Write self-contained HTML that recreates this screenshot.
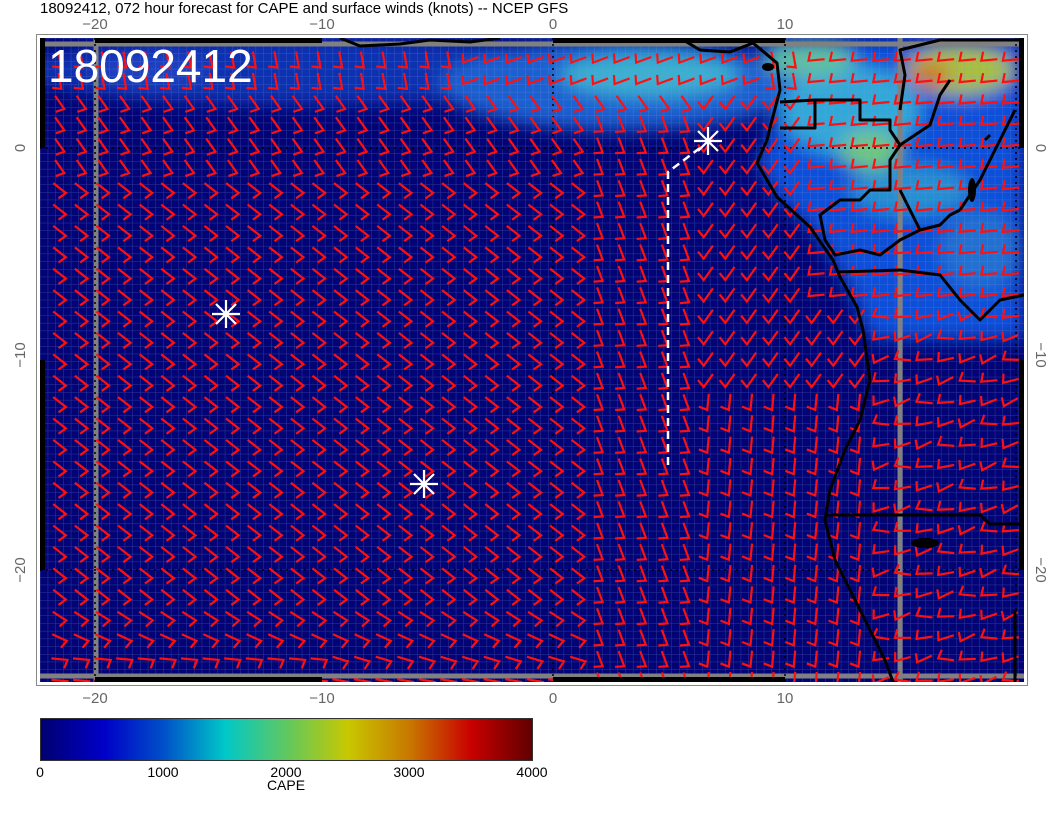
<!DOCTYPE html>
<html><head><meta charset="utf-8"><style>
html,body{margin:0;padding:0;background:#fff;width:1056px;height:816px;overflow:hidden}
svg{display:block}
text{font-family:"Liberation Sans",sans-serif}
</style></head><body>
<svg id="s" width="1056" height="816" viewBox="0 0 1056 816" xmlns="http://www.w3.org/2000/svg">
<defs>
<pattern id="g" width="7.7" height="7.7" patternUnits="userSpaceOnUse" x="40" y="38">
<path d="M0 0H7.7M0 0V7.7" stroke="rgba(130,150,230,0.35)" stroke-width="1" fill="none"/>
</pattern>
<filter id="b" x="-30%" y="-30%" width="160%" height="160%"><feGaussianBlur stdDeviation="9"/></filter>
<linearGradient id="cb" x1="0" x2="1">
<stop offset="0" stop-color="#000070"/><stop offset="0.13" stop-color="#0000c8"/>
<stop offset="0.25" stop-color="#0050c8"/><stop offset="0.375" stop-color="#00c8c8"/>
<stop offset="0.5" stop-color="#60c860"/><stop offset="0.625" stop-color="#c8c800"/>
<stop offset="0.75" stop-color="#c87800"/><stop offset="0.875" stop-color="#c80000"/>
<stop offset="1" stop-color="#600000"/></linearGradient>
<clipPath id="c"><rect x="40" y="38" width="984" height="644"/></clipPath>
</defs>
<text x="40" y="13" font-size="15" fill="#000">18092412, 072 hour forecast for CAPE and surface winds (knots) -- NCEP GFS</text>
<rect x="36.5" y="34.5" width="991" height="651" fill="#fff" stroke="#888"/>
<g clip-path="url(#c)">
<rect x="40" y="38" width="984" height="644" fill="#020475"/>
<g filter="url(#b)">
<ellipse cx="300" cy="70" rx="280" ry="35" fill="#1030b0"/>
<ellipse cx="620" cy="85" rx="180" ry="45" fill="#1a60d0"/>
<ellipse cx="650" cy="75" rx="90" ry="22" fill="#3ab0d0"/>
<polygon points="753,38 777,63 780,90 767,140 757,163 777,197 810,227 833,260 857,307 870,340 1024,340 1024,38" fill="#1050d8"/>
<ellipse cx="850" cy="110" rx="70" ry="45" fill="#30a8d8"/>
<ellipse cx="870" cy="150" rx="30" ry="20" fill="#70c880"/>
<ellipse cx="960" cy="70" rx="55" ry="25" fill="#a8c040"/>
<ellipse cx="930" cy="75" rx="20" ry="12" fill="#d07020"/>
<ellipse cx="810" cy="60" rx="45" ry="18" fill="#60c0a0"/>
<ellipse cx="910" cy="190" rx="60" ry="25" fill="#2890d0"/>
<ellipse cx="980" cy="250" rx="40" ry="40" fill="#2070d0"/>
<ellipse cx="150" cy="70" rx="60" ry="20" fill="#1a40c0"/>
</g>
<rect x="40" y="38" width="984" height="644" fill="url(#pat)"/>
<rect x="40" y="38" width="984" height="644" fill="url(#g)"/>
<g stroke="#808080" stroke-width="5" fill="none">
<path d="M40 44H1024M40 676H1024M96 38V682M900 38V682"/>
</g>
<g stroke="#000" stroke-width="1.5" stroke-dasharray="2 4" fill="none">
<path d="M95 38V682M553 38V682M785 38V682M1016 38V682M40 148H1024M40 570H1024"/>
</g>
<g id="barbs" stroke="#ff1010" stroke-width="2.2" fill="none" stroke-linecap="square"></g>
<g stroke="#000" stroke-width="3" fill="none" stroke-linejoin="round">
<path d="M340 38 L360 46 L400 44 L430 40 L470 42 L500 38"/>
<path d="M680 38 L700 50 L730 52 L753 43 L777 63 L780 90 L772 120 L767 140 L757 163 L777 197 L810 227 L833 260 L840 277 L857 307 L863 330 L870 380 L860 420 L845 450 L830 490 L825 520 L835 560 L850 590 L870 630 L885 660 L893 682"/>
<path d="M780 102 L815 100 L815 128 L780 128"/>
<path d="M815 100 L860 100 L860 120 L890 120 L890 130 L900 145 L890 160 L890 190 L870 190 L860 200 L840 200 L820 215 L825 240 L835 255 L860 250 L880 255 L900 240 L920 230 L940 225 L950 215 L960 210"/>
<path d="M900 110 L905 75 L900 50 L940 40 L1024 40"/>
<path d="M900 145 L930 125 L940 95 L950 80"/>
<path d="M960 210 L980 180 L1000 140 L1015 110"/>
<path d="M990 135 L985 140"/>
<path d="M900 190 L920 230"/>
<path d="M838 272 L900 270 L940 275 L960 300 L980 320 L1000 300 L1024 295"/>
<path d="M825 515 L900 515 L980 515 L990 524 L1024 524"/>
<path d="M1015 610 L1015 682"/>
</g>
<g fill="#000"><ellipse cx="925" cy="543" rx="14" ry="5"/><ellipse cx="972" cy="190" rx="4" ry="12"/><ellipse cx="768" cy="67" rx="6" ry="4"/></g>
<path d="M668 465 V172 L700 148" stroke="#fff" stroke-width="2.5" stroke-dasharray="8 5" fill="none"/>
<g stroke="#fff" stroke-width="2.2">
<path d="M212 314H240M226 300V328M216 304L236 324M236 304L216 324"/>
<path d="M410 484H438M424 470V498M414 474L434 494M434 474L414 494"/>
<path d="M694 141H722M708 127V155M698 131L718 151M718 131L698 151"/>
</g>
<text x="48" y="82" font-size="46" fill="#fff">18092412</text>
</g>
<g fill="#000">
<rect x="95" y="38" width="227" height="5"/><rect x="553" y="38" width="232" height="5"/>
<rect x="95" y="677" width="227" height="5"/><rect x="553" y="677" width="232" height="5"/>
<rect x="40" y="38" width="5" height="110"/><rect x="40" y="360" width="5" height="210"/>
<rect x="1019" y="38" width="5" height="110"/><rect x="1019" y="360" width="5" height="210"/>
</g>
<g font-size="15" fill="#666" text-anchor="middle">
<text x="95" y="29">−20</text><text x="322" y="29">−10</text><text x="553" y="29">0</text><text x="785" y="29">10</text>
<text x="95" y="703">−20</text><text x="322" y="703">−10</text><text x="553" y="703">0</text><text x="785" y="703">10</text>
<text transform="translate(25,148) rotate(-90)">0</text>
<text transform="translate(25,355) rotate(-90)">−10</text>
<text transform="translate(25,570) rotate(-90)">−20</text>
<text transform="translate(1036,148) rotate(90)">0</text>
<text transform="translate(1036,355) rotate(90)">−10</text>
<text transform="translate(1036,570) rotate(90)">−20</text>
</g>
<rect x="40.5" y="718.5" width="492" height="42" fill="url(#cb)" stroke="#333"/>
<g font-size="14" fill="#000" text-anchor="middle">
<text x="40" y="777">0</text><text x="163" y="777">1000</text><text x="286" y="777">2000</text><text x="409" y="777">3000</text><text x="532" y="777">4000</text>
<text x="286" y="790">CAPE</text>
</g>
</svg>
<script>
(function(){
var g=document.getElementById('barbs'),ns='http://www.w3.org/2000/svg',d='';
function ang(x,y){
 var a;
 if(y<100) a=80; else if(y<170) a=55; else a=38;
 if(y>600) a=38-(y-600)*0.35;
 if(y>640 && x<330) a=5;
 if(x>600 && x<700 && y>120) a=70;
 if(x>700 && y>100 && y<400) a=125;
 if(x>700 && y>=400) a=95;
 if(x>800 && y<300) a=175;
 if(x>880 && y>=300) a=150+((x*7+y*3)%40);
 if(x>470 && x<760 && y<100) a=160;
 return a;
}
for(var x=60;x<1020;x+=21.6){
 for(var y=60;y<690;y+=21.4){
  var a=ang(x,y)*Math.PI/180,L=15,b=a+1.85;
  var x0=x-Math.cos(a)*L/2,y0=y-Math.sin(a)*L/2,x1=x+Math.cos(a)*L/2,y1=y+Math.sin(a)*L/2;
  var x2=x1+Math.cos(b)*8,y2=y1+Math.sin(b)*8;
  d+='M'+x0.toFixed(1)+' '+y0.toFixed(1)+'L'+x1.toFixed(1)+' '+y1.toFixed(1)+'L'+x2.toFixed(1)+' '+y2.toFixed(1);
 }
}
var p=document.createElementNS(ns,'path');p.setAttribute('d',d);g.appendChild(p);
})();
</script>
</body></html>
